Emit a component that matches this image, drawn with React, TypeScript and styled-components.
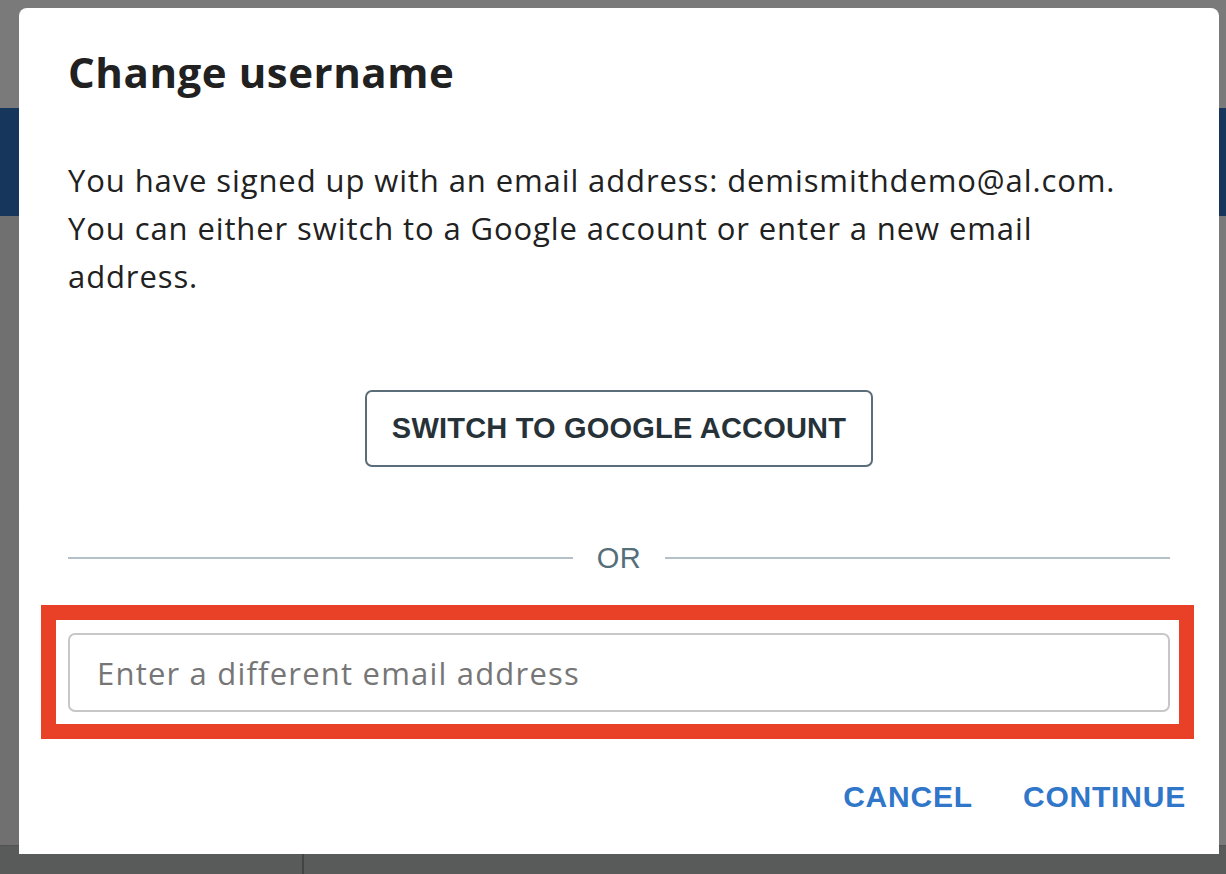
import styled, { createGlobalStyle } from "styled-components";

const GlobalStyle = createGlobalStyle`
  html, body {
    margin: 0;
    padding: 0;
  }

  body {
    background-color: #787878;
    overflow: hidden;
  }

  * {
    box-sizing: border-box;
  }
`;

export default function App() {
  return (
    <>
      <GlobalStyle />
      <Page>
        <TopStrip />
        <HeaderBar />
        <Content />
        <BottomBar>
          <BottomCell $width={304} />
          <BottomCell />
        </BottomBar>
      </Page>

      <Modal role="dialog" aria-labelledby="change-username-title">
        <Title id="change-username-title">Change username</Title>
        <Body>
          You have signed up with an email address: demismithdemo@al.com.
          <br />
          You can either switch to a Google account or enter a new email
          address.
        </Body>

        <GoogleRow>
          <OutlineButton type="button">SWITCH TO GOOGLE ACCOUNT</OutlineButton>
        </GoogleRow>

        <Divider>
          <DividerLine />
          <DividerText>OR</DividerText>
          <DividerLine />
        </Divider>

        <Highlight>
          <EmailInput type="email" placeholder="Enter a different email address" />
        </Highlight>

        <Footer>
          <TextButton type="button">CANCEL</TextButton>
          <TextButton type="button">CONTINUE</TextButton>
        </Footer>
      </Modal>
    </>
  );
}

const Page = styled.div`
  height: 874px;
  width: 100%;

  display: flex;
  flex-direction: column;
`;

const TopStrip = styled.div`
  height: 108px;
  background-color: #7a7a7a;
`;

const HeaderBar = styled.div`
  height: 108px;
  background-color: #17365c;
`;

const Content = styled.div`
  flex: 1;
  background: linear-gradient(90deg, #707070 0%, #767676 60%, #7a7a7a 100%);
`;

const BottomBar = styled.div`
  height: 29px;
  display: flex;
  background-color: #595a5a;
  border-top: 1px solid #525252;
`;

const BottomCell = styled.div<{ $width?: number }>`
  ${({ $width }) => ($width ? `width: ${$width}px;` : "flex: 1;")}
  border-right: 2px solid #424343;

  &:last-child {
    border-right: none;
  }
`;

const Modal = styled.div`
  position: fixed;
  top: 8px;
  left: 19px;
  width: 1200px;
  height: 846px;

  display: flex;
  flex-direction: column;

  padding: 38px 49px 0 49px;
  background-color: #ffffff;
  border-radius: 8px 8px 0 0;
  font-family: "Open Sans", "Liberation Sans", sans-serif;
  color: #212121;
`;

const Title = styled.h2`
  margin: 0;
  font-size: 42px;
  font-weight: 700;
  line-height: 52px;
  letter-spacing: 0.55px;
`;

const Body = styled.p`
  margin: 58px 0 0 0;
  font-size: 31px;
  font-weight: 400;
  line-height: 48px;
  letter-spacing: 0.9px;
`;

const GoogleRow = styled.div`
  display: flex;
  justify-content: center;
  margin-top: 90px;
`;

const OutlineButton = styled.button`
  height: 77px;
  padding: 0 25px;

  background: #ffffff;
  border: 2px solid #5b6d79;
  border-radius: 7px;

  font-family: "Liberation Sans", Arial, sans-serif;
  font-size: 29px;
  font-weight: 700;
  letter-spacing: 0.2px;
  color: #263238;
  cursor: pointer;
`;

const Divider = styled.div`
  height: 40px;
  margin-top: 71px;

  display: flex;
  align-items: center;
  gap: 24px;
`;

const DividerLine = styled.div`
  flex: 1;
  height: 2px;
  background-color: #b3c0c7;
`;

const DividerText = styled.span`
  font-family: "Liberation Sans", Arial, sans-serif;
  font-size: 29px;
  font-weight: 400;
  color: #546e7a;
  letter-spacing: 0.5px;
`;

const Highlight = styled.div`
  margin: 27px -24px 0 -27px;
  padding: 13px 9px 12px 12px;
  border: 15px solid #e94128;
`;

const EmailInput = styled.input`
  display: block;
  width: 100%;
  height: 79px;
  padding: 0 27px;

  border: 2px solid #c7c7c7;
  border-radius: 7px;
  outline: none;

  font-family: "Open Sans", "Liberation Sans", sans-serif;
  font-size: 31px;
  letter-spacing: 1.2px;
  color: #212121;

  &::placeholder {
    color: #767676;
  }
`;

const Footer = styled.div`
  display: flex;
  justify-content: flex-end;
  gap: 18px;

  margin: 33px -32px 0 0;
`;

const TextButton = styled.button`
  height: 50px;
  padding: 0 16px;

  background: none;
  border: none;

  font-family: "Liberation Sans", Arial, sans-serif;
  font-size: 30px;
  font-weight: 700;
  letter-spacing: 0.8px;
  color: #3076c9;
  cursor: pointer;
`;
